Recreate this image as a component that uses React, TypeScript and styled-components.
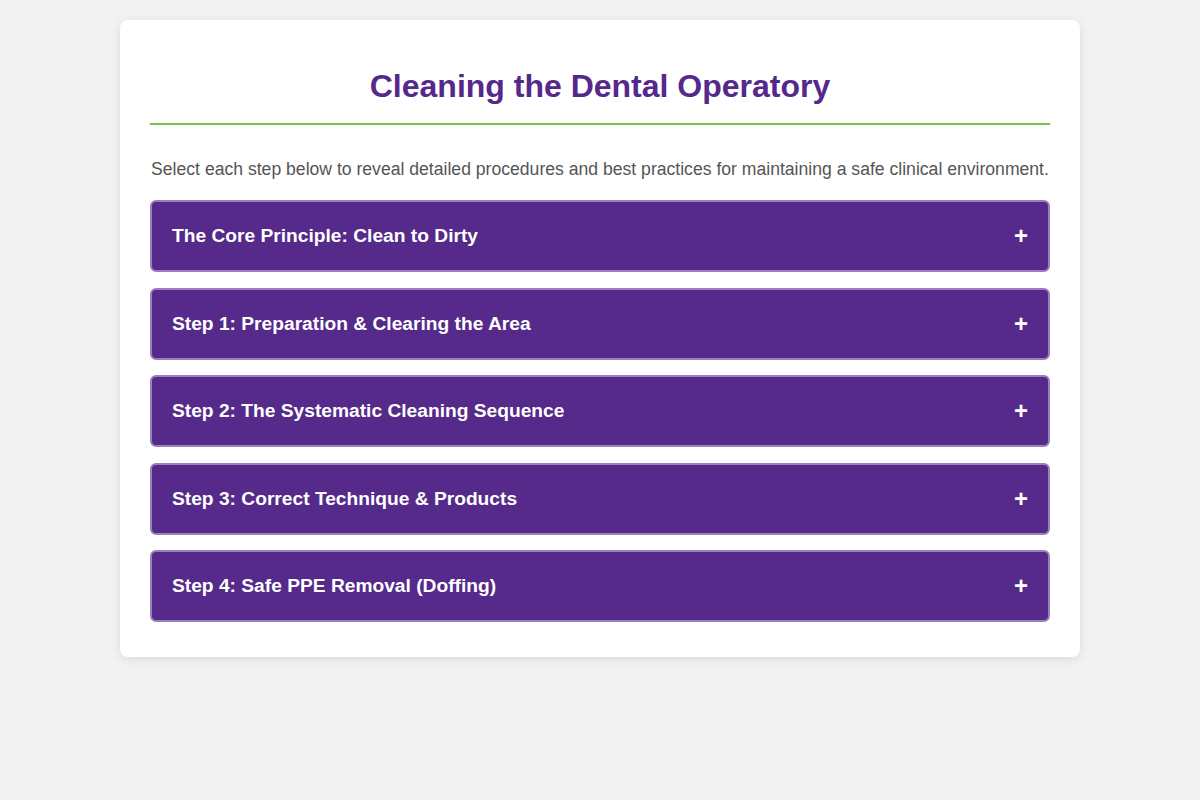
import React, { useState } from "react";
import styled, { createGlobalStyle } from "styled-components";

const Global = createGlobalStyle`
  html, body { margin: 0; padding: 0; }
  body {
    background: #f2f2f2;
    font-family: "Liberation Sans", Arial, sans-serif;
    color: #333;
  }
`;

const Page = styled.div`
  padding: 20px 0;
  display: flex;
  justify-content: center;
`;

const Card = styled.div`
  width: 960px;
  box-sizing: border-box;
  background: #ffffff;
  border-radius: 8px;
  box-shadow: 0 2px 10px rgba(0, 0, 0, 0.1);
  padding: 30px 30px 35px;
`;

const Title = styled.h1`
  margin: 18px 0 34px;
  padding-bottom: 18px;
  border-bottom: 2px solid #7ac04f;
  text-align: center;
  font-size: 32px;
  font-weight: 700;
  color: #55298b;
`;

const Intro = styled.p`
  margin: 0 0 20px;
  text-align: center;
  font-size: 17.6px;
  color: #555555;
`;

const List = styled.div`
  display: flex;
  flex-direction: column;
  gap: 15.5px;
`;

const Item = styled.div``;

const Header = styled.button<{ $open: boolean }>`
  width: 100%;
  display: flex;
  align-items: center;
  justify-content: space-between;
  box-sizing: border-box;
  padding: 20px;
  background: #552a8a;
  border: 2px solid #9a81bd;
  border-radius: ${(p) => (p.$open ? "6px 6px 0 0" : "6px")};
  color: #ffffff;
  cursor: pointer;
  font-family: "Liberation Sans", Arial, sans-serif;
  text-align: left;
`;

const HeaderText = styled.span`
  font-size: 19.2px;
  font-weight: 700;
`;

const Sign = styled.span`
  font-size: 24px;
  font-weight: 700;
  line-height: normal;
`;

const Body = styled.div`
  padding: 16px 20px;
  border: 2px solid #9a81bd;
  border-top: none;
  border-radius: 0 0 6px 6px;
  font-size: 16px;
  color: #444;
  line-height: 1.5;
`;

const steps = [
  {
    title: "The Core Principle: Clean to Dirty",
    body: "Always work from the cleanest areas toward the most contaminated ones to avoid spreading microorganisms.",
  },
  {
    title: "Step 1: Preparation & Clearing the Area",
    body: "Put on appropriate PPE, then remove and dispose of single-use items and transport instruments for reprocessing.",
  },
  {
    title: "Step 2: The Systematic Cleaning Sequence",
    body: "Follow a consistent order: light handles, delivery unit, chair, bracket table, then countertops and sink.",
  },
  {
    title: "Step 3: Correct Technique & Products",
    body: "Use a registered disinfectant, apply the 'spray-wipe-spray' method and respect the stated contact time.",
  },
  {
    title: "Step 4: Safe PPE Removal (Doffing)",
    body: "Remove gloves first, then gown, eyewear and mask, performing hand hygiene at the end.",
  },
];

export default function App() {
  const [open, setOpen] = useState<number | null>(null);
  return (
    <>
      <Global />
      <Page>
        <Card>
          <Title>Cleaning the Dental Operatory</Title>
          <Intro>
            Select each step below to reveal detailed procedures and best practices for maintaining a safe clinical
            environment.
          </Intro>
          <List>
            {steps.map((s, i) => (
              <Item key={s.title}>
                <Header $open={open === i} onClick={() => setOpen(open === i ? null : i)}>
                  <HeaderText>{s.title}</HeaderText>
                  <Sign>{open === i ? "−" : "+"}</Sign>
                </Header>
                {open === i && <Body>{s.body}</Body>}
              </Item>
            ))}
          </List>
        </Card>
      </Page>
    </>
  );
}
